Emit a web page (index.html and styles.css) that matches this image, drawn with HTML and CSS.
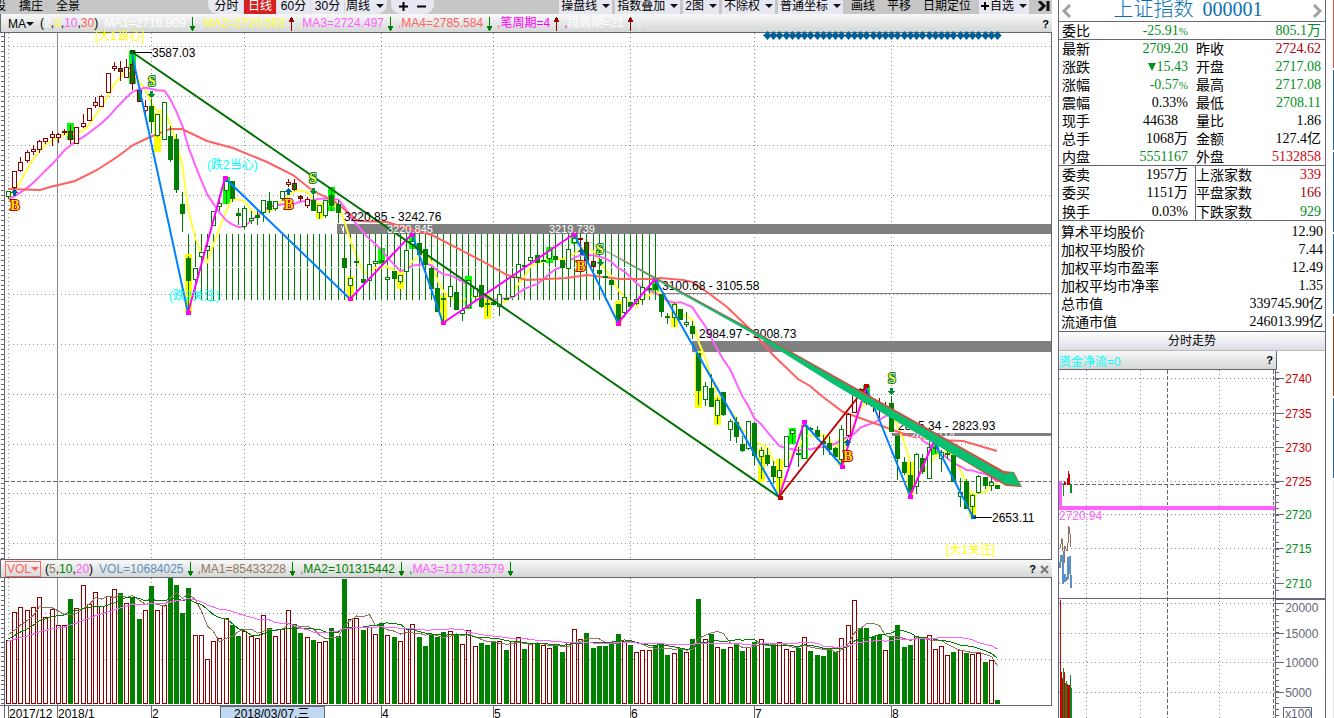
FILE: index.html
```html
<!DOCTYPE html>
<html lang="zh-CN">
<head>
<meta charset="utf-8">
<title>上证指数 000001</title>
<link rel="stylesheet" href="styles.css">
</head>
<body>
<div class="app">
  <main class="main">
    <nav class="toolbar">
      <div class="links">
        <button class="plain">股</button><button class="plain">擒庄</button><button class="plain">全景</button>
      </div>
      <div class="group periods">
        <button>分时</button><button class="active">日线</button><button>60分</button><button>30分</button><button class="drop">周线</button>
      </div>
      <div class="group zoomers">
        <button aria-label="放大"><svg width="9" height="9"><path d="M0 4.5H9M4.5 0V9" stroke="#000" stroke-width="2"/></svg></button>
        <button aria-label="缩小"><svg width="9" height="9"><path d="M0 4.5H9" stroke="#000" stroke-width="2"/></svg></button>
      </div>
      <div class="tools">
        <button class="tool drop">操盘线</button>
        <button class="tool drop">指数叠加</button>
        <button class="tool drop">2图</button>
        <button class="tool drop">不除权</button>
        <button class="tool drop">普通坐标</button>
        <div class="links texts"><button class="plain">画线</button><button class="plain">平移</button><button class="plain">日期定位</button></div>
        <button class="tool drop add"><svg width="8" height="8"><path d="M0 4H8M4 0V8" stroke="#000" stroke-width="2"/></svg>自选</button>
        <button class="plain last" aria-label="收起"><svg width="12" height="10"><path d="M1 0L6 5L1 10M10 0V10" fill="none" stroke="#111" stroke-width="3"/></svg></button>
      </div>
    </nav>

    <header class="bar">
      <button class="name drop tight">MA</button>
      <span class="params">(<i class="white">2</i>,<i class="yellow">4</i>,<i class="pink">10</i>,<i class="red">30</i>)</span>
      <span class="white down">MA1=2716.909</span>
      <span class="yellow up"><i class="white">,</i>MA2=2720.563</span>
      <span class="pink down"><i class="yellow">,</i>MA3=2724.497</span>
      <span class="red down"><i class="pink">,</i>MA4=2785.584</span>
      <span class="magenta up"><i class="red">,</i>笔周期=4</span>
      <span class="white up"><i class="magenta">,</i>段周期=21</span>
      <span class="white">,</span>
      <button class="help">?</button>
    </header>

    <svg class="chart spill" viewBox="0 33 1052 526" id="price">
      <g id="priceGrid"></g>
      <path class="frame" d="M4.5 33V559M1051.5 33V559"/>
      <path class="month" d="M57.5 33V559"/>
      <path class="cross" d="M5 481.5H1051"/>
      <g fill="#808080">
        <rect x="337" y="224" width="714" height="10"/>
        <rect x="658" y="293" width="393" height="1"/>
        <rect x="692" y="341" width="359" height="11"/>
        <rect x="892" y="433" width="159" height="3"/>
      </g>
      <path d="M341 226L344 233M343 226V231" stroke="#fff" fill="none"/>
      <g id="hatch"></g>
      <path class="whitedash" d="M188 267.5H656"/>
      <g id="marks"></g>
      <g id="averages"></g>
      <path class="avg redline" d="M8 189L40 190L50 187L75 181L97 170L117 157L133 145L150 137L170 129L182 129L207 141L233 148L267 162L293 175L313 191L334 201L345 210L358 221L387 222L413 230L432 235L480 260L507 275L527 280L567 278L587 275L620 279L653 279L660 278L683 280L692 282L707 292L727 307L753 332L773 355L798 379L810 386L823 397L843 412L860 418L893 430L913 437L937 440L963 441L980 446L997 451"/>
      <g id="candles"></g>
      <g class="stroke blue">
        <path d="M132 54L188 313M225 178L350 299M412 234L443 323M574 234L618 323M655 279L779 497M804 423L842 466M866 387L910 496M934 441L973 517"/>
      </g>
      <g class="stroke mag">
        <path d="M188 313L225 178M350 299L412 234M443 323L574 234M618 323L655 279M779 497L804 423M842 466L866 387M910 496L934 441"/>
      </g>
      <path class="stroke dark" d="M132 52L779 497"/>
      <path class="stroke crimson" d="M779 497L866 387"/>
      <g id="pivots"></g>
      <path d="M152 52.5H133M992 517.5H974" stroke="#000"/>
      <g class="label">
        <text x="152" y="57">3587.03</text>
        <text x="344" y="221">3220.85 - 3242.76</text>
        <text x="662" y="290">3100.68 - 3105.58</text>
        <text x="699" y="338">2984.97 - 3008.73</text>
        <text x="898" y="430">2815.34 - 2823.93</text>
        <text x="992" y="522">2653.11</text>
      </g>
      <g class="small">
        <text x="387" y="233">3220.845</text>
        <text x="549" y="233">3219.739</text>
        <text x="910" y="439">2804.114</text>
      </g>
      <g class="note">
        <text x="95" y="40" fill="#ff0">[大1当心]</text>
        <text x="946" y="554" fill="#ff0">[大1关注]</text>
        <text x="207" y="169" fill="#0ff">(跌2当心)</text>
        <text x="169" y="300" fill="#0ff">(跌2关注)</text>
      </g>
      <g class="smooth">
        <path d="M574 233L755 331L1004 471L1014 472L1022 487L1006 486L947 451L755 334Z" fill="#d05040"/>
        <path d="M574 234L755 332L835 378L947 441L1005 474L1013 472L1021 486L1005 484L1001 481L947 451L833 384L755 335Z" fill="#08c070"/>
      </g>
      <g id="signals"></g>
      <g id="diamonds" class="smooth"></g>
    </svg>

    <header class="bar second">
      <button class="name drop boxed">VOL</button>
      <span class="params">(<i class="brown">5</i>,<i class="green">10</i>,<i class="pink">20</i>)</span>
      <span class="steel down">VOL=10684025</span>
      <span class="brown down">,MA1=85433228</span>
      <span class="green down"><i class="brown">,</i>MA2=101315442</span>
      <span class="pink down"><i class="green">,</i>MA3=121732579</span>
      <button class="help">?</button>
      <button class="close" aria-label="关闭"><svg width="9" height="9"><path d="M1 1L8 8M8 1L1 8" stroke="#777" stroke-width="2"/></svg></button>
    </header>

    <svg class="chart" viewBox="0 578 1052 140" id="volume">
      <g id="volGrid"></g>
      <path class="frame" d="M4.5 578V718M1051.5 578V705M0 705.5H1052"/>
      <path class="month" d="M57.5 578V705"/>
      <g id="bars"></g>
      <rect x="220.500" y="706" width="104" height="14" fill="#c0d8f0" stroke="#667"/>
      <path class="frame" d="M8.500 706V718M57.500 706V718M151.500 706V718M381.500 706V718M493.500 706V718M630.500 706V718M754.500 706V718M891.500 706V718"/>
      <g class="label">
        <text x="9" y="718">2017/12</text><text x="58" y="718">2018/1</text><text x="152" y="718">2</text>
        <text x="234" y="718">2018/03/07,三</text>
        <text x="382" y="718">4</text><text x="494" y="718">5</text><text x="631" y="718">6</text><text x="755" y="718">7</text><text x="892" y="718">8</text>
      </g>
    </svg>
  </main>

  <aside class="side">
    <div class="title">
      <button aria-label="上一个"><svg width="9" height="14"><path d="M8 1L2 7L8 13" fill="none" stroke="#a0a0a0" stroke-width="3"/></svg></button>
      <h1>上证指数 <b>000001</b></h1>
      <button aria-label="下一个"><svg width="9" height="14"><path d="M1 1L7 7L1 13" fill="none" stroke="#a0a0a0" stroke-width="3"/></svg></button>
    </div>
    <table class="quote">
      <tbody>
        <tr><th>委比</th><td class="fall">-25.91<small>%</small></td><th></th><td class="fall">805.1<u>万</u></td></tr>
      </tbody>
      <tbody>
        <tr><th>最新</th><td class="fall">2709.20</td><th>昨收</th><td class="rise">2724.62</td></tr>
        <tr><th>涨跌</th><td class="fall"><s class="tri"></s>15.43</td><th>开盘</th><td class="fall">2717.08</td></tr>
        <tr><th>涨幅</th><td class="fall">-0.57<small>%</small></td><th>最高</th><td class="fall">2717.08</td></tr>
        <tr><th>震幅</th><td>0.33%</td><th>最低</th><td class="fall">2708.11</td></tr>
        <tr><th>现手</th><td class="inset">44638</td><th>量比</th><td>1.86</td></tr>
        <tr><th>总手</th><td>1068<u>万</u></td><th>金额</th><td>127.4<u>亿</u></td></tr>
        <tr><th>内盘</th><td class="fall">5551167</td><th>外盘</th><td class="rise hot">5132858</td></tr>
      </tbody>
      <tbody class="split">
        <tr><th>委卖</th><td>1957<u>万</u></td><th>上涨家数</th><td class="rise hot">339</td></tr>
        <tr><th>委买</th><td>1151<u>万</u></td><th>平盘家数</th><td class="rise">166</td></tr>
        <tr><th>换手</th><td>0.03%</td><th>下跌家数</th><td class="fall">929</td></tr>
      </tbody>
    </table>
    <table class="totals">
      <tr><th>算术平均股价</th><td>12.90</td></tr>
      <tr><th>加权平均股价</th><td>7.44</td></tr>
      <tr><th>加权平均市盈率</th><td>12.49</td></tr>
      <tr><th>加权平均市净率</th><td>1.35</td></tr>
      <tr><th>总市值</th><td>339745.90<u>亿</u></td></tr>
      <tr><th>流通市值</th><td>246013.99<u>亿</u></td></tr>
    </table>
    <h2>分时走势</h2>
    <div class="flow"><span>资金净流=0</span><button class="help">?</button></div>
    <svg class="chart" viewBox="1059 369 267 349" id="intraday">
      <g id="dayGrid"></g>
      <path d="M1276.500 350V718" class="frame"/>
      <path d="M1059 598.500H1326M1276 599.500H1326" class="frame"/>
      <path class="cross" d="M1062 483.500H1276"/>
      <path d="M1059 480H1062V506H1276V510H1059Z" fill="#ff60ff"/>
      <path d="M1062.500 483H1071" stroke="#00e0e0"/>
      <path d="M1064.500 480V484M1065.500 481V484M1068.500 470V484M1069.500 473V484M1067.500 477V484" stroke="#d00000"/>
      <path d="M1063.500 484V495M1070.500 484V492M1071.500 484V492" stroke="#009020"/>
      <path d="M1060 548L1061 544L1062 538L1063 550L1064 563L1065 546L1067 551L1068 543L1069 526L1070 533L1071 547" stroke="#907060" fill="none"/>
      <path d="M1060 568L1061 556L1063 556L1063 584L1065 574L1066 580L1068 578L1068 558L1070 557L1071 588" stroke="#5b90c0" stroke-width="2" fill="none"/>
      <g id="dayBars"></g>
      <text class="tag" x="1059" y="520">2720.94</text>
      <g id="dayLabels"></g>
      <rect x="1284.500" y="707.500" width="28" height="14" fill="none" stroke="#667"/>
      <text class="tag gray" x="1286" y="718">x100</text>
    </svg>
  </aside>
  <div class="strip"><i class="s1"></i><i></i><i></i><i></i><i class="s2"></i><i></i><i class="s3"></i></div>
</div>
<script src="chart.js"></script>
</body>
</html>
```
FILE: styles.css
```css
* { box-sizing: border-box; }
body { margin: 0; background: #fff; color: #000; font-family: "Liberation Sans", "Noto Sans CJK SC", sans-serif; font-size: 12px; overflow: hidden; }
button { border: 0; background: none; padding: 0; margin: 0; font: inherit; color: inherit; line-height: 18px; display: inline-flex; align-items: center; white-space: nowrap; }
i, u, s { font-style: normal; text-decoration: none; }
.app { display: grid; grid-template-columns: minmax(0, 1fr) 268px 8px; height: 100vh; overflow: hidden; }
.main { min-width: 0; margin-right: 6px; }

.toolbar { height: 14px; overflow: hidden; background: #c6c6c6; display: flex; align-items: flex-end; }
.toolbar button { height: 16px; line-height: 16px; flex: none; }
.links { display: flex; gap: 12px; flex: none; }
.toolbar > .links { width: 208px; margin-left: -6px; padding-right: 8px; gap: 13px; }
.group { display: flex; background: #e8e8f2; border-radius: 0 0 10px 10px; height: 24px; align-items: flex-end; flex: none; }
.periods { width: 179px; margin-left: 6px; padding-left: 2px; }
.periods button { width: 34px; justify-content: center; border-right: 1px solid #d6d6e0; }
.periods button:last-child { width: 40px; border: 0; }
.periods .active { width: 33px; background: #d42020; color: #fff; }
.zoomers { margin-left: 4px; width: 43px; justify-content: space-evenly; }
.drop::after { content: ""; border: 4px solid transparent; border-top-color: #111; border-bottom-width: 0; margin-left: 6px; }
.tools { display: flex; gap: 3px; margin-left: auto; flex: none; padding-right: 2px; }
.tool { background: #e8e8f2; padding: 0 2px; }
.tool.drop::after { margin-left: 5px; }
.texts { padding: 0 5px; }
.add svg { margin-right: 1px; }
.last { margin-left: 6px; }

.bar { height: 19px; display: flex; align-items: center; gap: 4px; padding: 1px 3px 0 4px; background: linear-gradient(#f8f8f8, #d4d8d6); border-bottom: 1px solid #667; line-height: 17px; white-space: nowrap; overflow: hidden; border-left: 1px solid #667; }
.bar.second { border-top: 1px solid #667; padding-left: 4px; }
.bar .name { margin-right: 2px; padding-left: 3px; }
.tight::after { margin-left: 0; }
.params { margin-right: 2px; }
.bar .boxed { border: 1px solid #ff6060; color: #ff6060; line-height: 14px; padding: 0 1px; margin-right: 0; }
.boxed::after { border-top-color: #ff6060; margin-left: 0; }
.white { color: #fff; }
.yellow { color: #ff3; }
.pink { color: #ff60ff; }
.red { color: #ff6060; }
.magenta { color: #f0f; }
.brown { color: #907860; }
.green { color: #008000; }
.steel { color: #5b90c0; }
.down, .up { display: inline-flex; align-items: center; }
.down::after, .up::after { content: ""; width: 7px; height: 14px; margin-left: 3px; }
.down::after { background: linear-gradient(#008000, #008000) 3px 0 / 1px 14px no-repeat, linear-gradient(#008000, #008000) 1px 9px / 5px 2px no-repeat, linear-gradient(#008000, #008000) 2px 11px / 3px 2px no-repeat; }
.up::after { background: linear-gradient(#900000, #900000) 3px 0 / 1px 14px no-repeat, linear-gradient(#900000, #900000) 1px 3px / 5px 2px no-repeat, linear-gradient(#900000, #900000) 2px 1px / 3px 2px no-repeat; }
.help { margin-left: auto; font-weight: bold; font-size: 11px; }

.chart { display: block; width: 100%; height: auto; shape-rendering: crispEdges; }
.spill { overflow: visible; }
.smooth { shape-rendering: auto; }
.frame { stroke: #667; fill: none; }
.month { stroke: #888; }
.dots { stroke: #909090; stroke-dasharray: 1 3; }
.cross { stroke: #666; stroke-dasharray: 4 2; }
.whitedash { stroke: #fff; stroke-dasharray: 5 2; }
.hatchline { stroke: #008000; }
.avg { fill: none; stroke-width: 2; shape-rendering: auto; }
.redline { stroke: #ff6060; }
.yellowline { stroke: #ffff40; }
.pinkline { stroke: #ff60ff; }
.thin { fill: none; stroke-width: 1; }
.brownline { stroke: #907860; }
.greenline { stroke: #008000; }
.stroke { stroke-width: 2; fill: none; shape-rendering: auto; }
.blue { stroke: #0080ff; }
.mag { stroke: #f0f; }
.dark { stroke: #007000; }
.crimson { stroke: #c00000; }
.label text, .tag { font-size: 12px; }
.small { fill: #fff; font-size: 11px; }
.note { font-size: 12px; }
.tag { fill: #ff60ff; }
.gray { fill: #667; }
.signal { font: bold 14px "Liberation Serif", serif; text-anchor: middle; stroke-width: 2px; paint-order: stroke; shape-rendering: auto; }

.side { border-left: 1px solid #667; border-right: 1px solid #667; min-width: 0; }
.title { display: flex; align-items: center; justify-content: space-between; height: 22px; border-bottom: 1px solid #667; padding: 0 3px; overflow: hidden; }
.title button { line-height: 14px; }
h1 { margin: 0; padding: 0 8px 4px 0; font: 300 20px/20px "Liberation Serif", "Noto Sans CJK SC", serif; color: #0a70b0; }
h1 b { font-weight: normal; margin-left: 4px; }
table { width: 100%; border-collapse: separate; border-spacing: 0; table-layout: fixed; font: 14px/18px "Liberation Serif", "Noto Sans CJK SC", serif; }
th, td { padding: 0; height: 18px; line-height: 18px; white-space: nowrap; overflow: hidden; }
th { text-align: left; font: 14px/18px "Liberation Sans", "Noto Sans CJK SC", sans-serif; padding-left: 3px; }
td { text-align: right; }
.quote th:first-child { width: 48px; }
.quote td:nth-child(2) { width: 81px; }
.quote th:nth-child(3) { width: 66px; padding-left: 8px; }
.quote td:last-child { padding-right: 4px; }
.quote tr:last-child > * { box-shadow: inset 0 -1px #667; }
.quote .split th:nth-child(3) { background: linear-gradient(#667, #667) 7px 0 / 1px 100% no-repeat; padding-left: 8px; }
.split tr:last-child > * { height: 19px; }
.totals { border-bottom: 1px solid #667; margin-top: 2px; }
.totals th { padding-left: 2px; }
.totals td { padding-right: 2px; }
.inset { padding-right: 10px; }
small { font-size: 11px; line-height: 11px; }
.fall { color: #009020; }
.rise { color: #a00010; }
.hot { color: #d00010; }
.tri { display: inline-block; border: 4px solid transparent; border-top: 8px solid #009020; border-bottom: 0; margin-right: 1px; }
h2 { margin: 0; font-size: 12px; font-weight: normal; text-align: center; line-height: 19px; height: 19px; background: linear-gradient(#fff, #dcdce8); border-bottom: 1px solid #bbb; }
.flow { height: 19px; width: 218px; display: flex; align-items: center; padding-right: 3px; color: #0ff; background: linear-gradient(#f8f8f8, #d4d8d6); border-right: 1px solid #667; border-bottom: 1px solid #667; }
.flow .help { color: #000; }
.strip { display: flex; flex-direction: column; gap: 2px; padding-left: 7px; }
.strip i { height: 80px; background: #2a6a9c; }
.strip .s1 { height: 68px; background: #d0504a; }
.strip .s2 { background: #984010; }
.strip .s3 { flex: 1; background: #e8e8ee; }
```
FILE: chart.js
```js
const $ = id => document.getElementById(id);
const X = i => Math.round(8 + 6.22 * i);
const path = (d, cls) => `<path class="${cls}" d="${d}"/>`;

// colour (r/g), body (f filled / h hollow), high, top, bottom, low
const candles = `gh 191 191 197 199|rh 171 171 188 190|rh 157 162 171 172|rh 150 152 161 163|rh 145 149 152 155|rh 140 141 150 153|rh 138 138 142 144|rh 131 134 138 146|rh 133 134 138 143|rh 129 131 133 135|rf 125 131 140 144|rh 127 127 144 144|rh 114 123 127 128|rh 108 108 121 121|rh 97 102 106 108|rh 95 96 107 107|rh 73 73 93 93|rh 62 66 69 71|rf 61 68 72 81|rh 59 67 78 78
rf 53 64 84 90|rf 85 90 102 102|rh 100 106 111 118|gf 99 106 122 133|gh 114 114 136 137|gh 102 102 140 140|gf 126 136 160 162|gf 134 139 190 193|gf 192 204 214 232|gf 256 258 281 313|gh 268 268 280 290|gh 252 252 257 257|gh 246 246 251 251|gh 211 211 226 226|gh 195 203 207 211|gh 181 181 191 204|gf 181 181 199 202|gf 208 213 216 225|gh 206 208 227 229|gh 211 218 221 224
gf 211 215 218 225|gh 200 200 213 222|gf 192 201 210 213|gh 201 201 209 211|gh 191 191 199 201|rh 179 182 185 187|rf 179 183 190 191|rf 195 196 199 201|rh 197 199 206 208|gf 194 200 211 211|gh 205 205 213 219|gh 200 200 216 218|gf 187 195 206 211|gf 200 204 213 223|gf 234 258 268 268|gh 275 278 286 299|gf 234 261 263 263|gf 262 279 283 290|gh 264 264 281 281|gh 261 261 264 264
gf 248 260 263 263|gh 277 277 280 284|gf 271 271 279 279|gh 275 275 282 284|gh 250 250 272 272|gh 235 241 245 249|gf 243 243 255 255|gf 249 249 265 265|gf 268 268 289 289|gf 288 288 312 312|gf 295 298 300 323|gh 286 286 297 307|gf 292 292 310 310|gh 300 310 314 321|gh 280 280 308 308|gh 280 288 297 299|gf 285 285 307 308|gf 299 303 305 316|gf 300 302 305 305|gh 294 294 307 316
gf 290 298 300 300|gh 277 277 297 297|gh 264 264 278 278|gf 257 265 267 270|gh 257 257 261 261|gf 255 255 263 264|gh 258 260 262 262|gh 247 250 259 263|gf 256 256 260 261|gf 260 260 268 268|gh 249 249 269 269|gh 235 238 243 244|rf 238 238 240 250|rf 242 242 261 261|rf 260 261 267 268|gf 261 270 274 275|gf 266 276 278 278|gf 279 280 285 287|gf 304 304 325 325|gh 291 297 313 317
gf 302 302 307 309|gh 295 299 304 305|gh 287 287 300 305|gh 285 288 290 292|gf 279 284 290 300|gf 294 294 312 317|gf 313 316 318 324|gh 303 304 318 327|gf 309 309 320 320|gh 312 322 325 327|gf 321 326 334 339|gf 353 353 391 405|gh 382 386 400 406|gf 374 388 407 407|gh 398 400 416 424|gf 392 392 415 416|gh 419 421 430 441|gf 417 422 437 443|gf 436 444 451 452|gh 421 421 449 450
gf 422 423 456 465|gh 447 450 457 479|gf 448 455 464 466|gf 461 466 477 484|gh 459 470 478 495|gh 436 436 467 467|gh 429 430 434 444|gf 447 453 455 467|gh 426 426 459 459|gf 427 428 430 431|gf 426 430 437 440|gf 435 441 444 455|gf 436 443 450 455|gf 447 448 457 459|gh 425 429 460 466|rh 413 414 436 437|rh 388 393 413 413|rf 388 389 395 399|rf 387 392 403 405|rf 400 405 407 412
rh 398 407 409 418|rh 402 406 408 412|gf 396 403 432 432|gf 436 436 459 480|gf 457 462 473 475|gf 462 475 492 495|gh 453 454 487 494|gf 454 458 472 474|gh 441 447 479 479|gh 438 447 449 454|gh 450 452 459 472|gf 449 453 454 459|gf 455 455 482 482|gh 478 492 497 507|gf 479 481 509 509|gh 494 495 507 517|gh 475 476 493 494|gf 477 477 486 489|gh 477 482 486 491|gf 485 485 489 489`
  .split(/[|\n]/).map(r => {
    const [t, ...n] = r.trim().split(' ');
    return [t, ...n.map(Number)];
  });

let out = '', hatch = '';
candles.forEach(([t, hi, top, bot, lo], i) => {
  const x = X(i), c = t[0] === 'r' ? '#900000' : '#008000';
  out += `<path d="M${x + .5} ${hi}V${top}M${x + .5} ${bot}V${lo}" stroke="${c}"/>`;
  out += `<rect x="${x - 1.5}" y="${top + .5}" width="4" height="${Math.max(1, bot - top - 1)}" stroke="${c}" fill="${t[1] === 'f' ? '#008000' : '#fff'}"/>`;
  if (i >= 29 && i <= 104) hatch += `M${x + .5} 234V300`;
});
$('candles').innerHTML = out;
$('hatch').innerHTML = path(hatch, 'hatchline');

// highlighted turning candles: index, top, bottom, colour
const Y = '#ffff00', L = '#00ff00';
$('marks').innerHTML = [[10,123,140,L],[20,51,84,L],[24,113,152,Y],[29,254,313,Y],[35,177,204,L],[50,204,219,Y],[52,187,211,L],[55,276,300,Y],[60,248,264,L],[63,271,289,Y],[65,234,249,L],[70,295,323,Y],[74,276,309,L],[77,299,319,Y],[87,247,263,L],[91,234,244,L],[98,301,325,Y],[104,279,293,L],[107,303,327,Y],[111,351,408,Y],[114,397,425,Y],[121,449,482,Y],[124,459,495,Y],[126,428,444,L],[128,425,459,L],[134,438,466,Y],[138,385,403,L],[145,462,495,Y],[149,438,455,L],[155,494,517,Y]]
  .map(([i, a, b, c]) => `<rect x="${X(i) - 3}" y="${a}" width="7" height="${b - a}" fill="${c}"/>`).join('');

const average = (values, before, n) => {
  const all = before.concat(values);
  return values.map((_, i) => {
    const end = i + before.length + 1;
    return all.slice(end - n, end).reduce((a, b) => a + b) / n;
  });
};
const line = (ys, cls) => path('M' + ys.map((y, i) => `${X(i) + .5} ${y.toFixed(1)}`).join('L'), cls);
const closes = candles.map(c => c[0][1] === 'f' ? c[3] : c[2]);
$('averages').innerHTML =
  line(average(closes, Array(10).fill(200), 4), 'avg yellowline') +
  line(average(closes, Array(10).fill(200), 10), 'avg pinkline');

// volume bar tops; g marks a falling day
const vols = `640 612 607 610 607 597 617 609 625 625 599g 608 585 604 592 606 596 589 593g 603 597g 619g 610 586g 610 605 578g 585g 613g 588g 635 635 659 641 638 618 625g 636g 631 636 638 615 628g 636 629 610 624g 633g 637 640g 642 641 628g 636g 579g 619 618 630g 627 634 623g 635 637g 641 628 624 637g 646g 635g 637g 632g 631 634g 644 630 646 643g 645g 642g 641 650g 641 637 649g 644 644g 645 648 644g 652g 642 629 639 633g 648g 646g 646g 642g 634g 641 645g 652 650 650 645g 643g 655g 653 648g 652 639g 599g 639 634g 647 649g 647 644g 651g 647 642g 639 648g 646g 642 649 651 648g 637 651g 655g 656g 648g 652g 638 625 600 628g 628g 637g 635g 650 636g 625g 647g 645g 636 637g 635 649 646 655 652g 650 653g 654 653 662g 660 700g`.split(' ');
const tops = vols.map(v => parseInt(v));
const prior = Array(16).fill(643).concat(Array(4).fill(633));
$('bars').innerHTML = vols.map((v, i) => {
  const y = tops[i], x = X(i);
  return v.endsWith('g')
    ? `<rect x="${x - 2}" y="${y}" width="5" height="${704 - y}" fill="#008000"/>`
    : `<rect x="${x - 1.5}" y="${y + .5}" width="4" height="${703 - y}" fill="#fff" stroke="#900000"/>`;
}).join('') +
  line(average(tops, prior, 5), 'thin brownline') +
  line(average(tops, prior, 10), 'thin greenline') +
  line(average(tops, prior, 20), 'thin pinkline');

const months = [8, 151, 244, 381, 493, 630, 754, 891];
const dotted = (xs, ys, x0, x1, y0, y1) =>
  xs.map(x => path(`M${x + .5} ${y0}V${y1}`, 'dots')).join('') +
  ys.map(y => path(`M${x0} ${y + .5}H${x1}`, 'dots')).join('');
const ticks = (x0, x1, y0, y1, step) => {
  let d = '';
  for (let y = y0; y < y1; y += step) d += `M${x0} ${Math.round(y) + .5}H${x1}`;
  return path(d, 'frame');
};
$('priceGrid').innerHTML = dotted(months, [46, 96, 145, 195, 245, 294, 344, 394, 444, 493, 543], 9, 1051, 33, 559) + ticks(1, 4, 36, 558, 4.97);
$('volGrid').innerHTML = dotted(months, [613, 659], 9, 1051, 578, 705) + ticks(1, 4, 581, 704, 4.7);

$('pivots').innerHTML = [[132,52,'#006000'],[188,313,'#f0f'],[225,178,'#f0f'],[350,299,'#f0f'],[412,235,'#f0f'],[443,323,'#f0f'],[574,235,'#f0f'],[618,324,'#f0f'],[655,280,'#f0f'],[780,498,'#c00000'],[804,422,'#f0f'],[842,467,'#f0f'],[866,386,'#c00000'],[910,497,'#f0f'],[934,441,'#f0f'],[973,517,'#0070d0']]
  .map(([x, y, c]) => `<rect x="${x - 2}" y="${y - 2}" width="5" height="4" fill="${c}"/>`).join('');

const letter = (x, y, s) => `<text class="signal" x="${x}" y="${y + 5}" ${s === 'B' ? 'fill="#ffe000" stroke="#b00000"' : 'fill="#ffff30" stroke="#007850"'}>${s}</text>`;
$('signals').innerHTML =
  [[15, 205], [289, 204], [581, 266], [848, 456]].map(p => letter(...p, 'B')).join('') +
  [[152, 81], [313, 178], [600, 249], [892, 378]].map(p => letter(...p, 'S')).join('') +
  [[14, 193], [288, 192], [581, 252], [847, 443]].map(([x, y]) => `<path fill="#0060a0" d="M${x + .5} ${y - 4}L${x + 4} ${y}H${x + 2}V${y + 3}H${x - 1}V${y}H${x - 3}Z"/>`).join('') +
  [[151, 94], [313, 191], [600, 262], [891, 391]].map(([x, y]) => `<path fill="#009030" d="M${x + .5} ${y + 4}L${x + 4} ${y}H${x + 2}V${y - 3}H${x - 1}V${y}H${x - 3}Z"/>`).join('');

let gems = '<path d="M763 35.500H1001" stroke="#006098"/>';
for (let i = 122; i < 160; i++) gems += `<path fill="#006098" d="M${X(i) + .5} 31L${X(i) + 4.5} 35.500L${X(i) + .5} 40L${X(i) - 3.5} 35.500Z"/>`;
$('diamonds').innerHTML = gems;

const prices = [[377, 2740], [412, 2735], [446, 2730], [480, 2725], [514, 2720], [548, 2715], [583, 2710]];
const amounts = [[603, 20000], [633, 15000], [662, 10000], [692, 5000]];
$('dayGrid').innerHTML =
  dotted([1086, 1140, 1220], prices.concat(amounts).map(p => p[0]), 1059, 1276, 369, 718) +
  path('M1167.500 369V718M1274.500 369V718', 'cross') +
  ticks(1276, 1280, 371, 597, 6.85) + ticks(1276, 1280, 603, 718, 5.9) +
  prices.concat(amounts).map(([y]) => path(`M1276 ${y + .5}H1285`, 'frame')).join('');
$('dayLabels').innerHTML =
  prices.map(([y, v]) => `<text x="1286" y="${y + 5}" fill="${v > 2724 ? '#c80000' : '#009020'}">${v}</text>`).join('') +
  amounts.map(([y, v]) => `<text x="1286" y="${v === 20000 ? 612 : y + 5}" fill="#667">${v}</text>`).join('');
$('dayBars').innerHTML = [[600, 1], [672, 1], [678, 1], [668, 0], [672, 1], [683, 0], [681, 0], [684, 1], [685, 1], [685, 1], [675, 0], [688, 0]]
  .map(([y, up], i) => `<rect x="${1060 + i}" y="${y}" width="1" height="${718 - y}" fill="${up ? '#d00000' : '#009020'}"/>`).join('');
```
